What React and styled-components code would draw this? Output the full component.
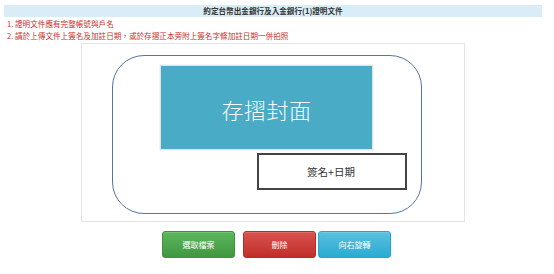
import React from "react";
import styled, { createGlobalStyle } from "styled-components";

const Global = createGlobalStyle`
  html, body { margin: 0; padding: 0; background: #fff; }
  body { font-family: "Noto Sans CJK TC", "Liberation Sans", sans-serif; }
`;

const Page = styled.div`
  width: 554px;
  height: 274px;
  padding: 5px 12px 0 4px;
  box-sizing: border-box;
`;

const TitleBar = styled.div`
  height: 12px;
  background: #d9edf7;
  color: #333;
  font-size: 7.6px;
  font-weight: bold;
  line-height: 12px;
  text-align: center;
`;

const Notes = styled.ol`
  list-style: none;
  margin: 1px 0 0;
  padding: 0 0 0 3px;
`;

const Note = styled.li`
  color: #c9302c;
  font-size: 7.6px;
  line-height: 11.5px;
  height: 11.5px;
  white-space: nowrap;
`;

const Frame = styled.div`
  width: 384px;
  height: 179px;
  margin: 2px auto 0;
  box-sizing: border-box;
  border: 1px solid #e4e4e4;
  padding: 11px 42px 0 30px;
`;

const Pocket = styled.div`
  height: 159px;
  box-sizing: border-box;
  border: 1.5px solid #5675a6;
  border-radius: 32px;
  display: flex;
  flex-direction: column;
  padding: 9px 14px 0 47px;
`;

const Cover = styled.div`
  width: 213px;
  height: 85px;
  box-sizing: border-box;
  background: #4aabc6;
  border: 1px solid #e2e2e2;
  box-shadow: 0 0 1px #bbb;
  color: #f4fafc;
  font-size: 22px;
  font-weight: 300;
  letter-spacing: 0.5px;
  display: flex;
  align-items: center;
  justify-content: center;
  padding-top: 3px;
`;

const SignBox = styled.div`
  align-self: flex-end;
  width: 150px;
  height: 37px;
  margin-top: 3px;
  box-sizing: border-box;
  border: 2px solid #444;
  color: #333;
  font-size: 10.5px;
  display: flex;
  align-items: center;
  justify-content: center;
  padding-right: 2px;
`;

const Actions = styled.div`
  display: flex;
  padding: 9px 0 0 158px;
`;

const tones = {
  green: ["#5cb85c", "#419641", "#3e8f3e"],
  red: ["#d9534f", "#c12e2a", "#b92c28"],
  blue: ["#5bc0de", "#2aabd2", "#28a4c9"],
};

const Button = styled.button`
  width: 73px;
  height: 27px;
  margin-right: ${(p) => p.$gap}px;
  border: 1px solid ${(p) => tones[p.$tone][2]};
  border-radius: 3px;
  background: linear-gradient(${(p) => tones[p.$tone][0]}, ${(p) => tones[p.$tone][1]});
  color: #fff;
  font-family: "Noto Sans CJK TC", "Liberation Sans", sans-serif;
  font-size: 8px;
  padding: 0;
  box-shadow: inset 0 1px 0 rgba(255, 255, 255, 0.15);
`;

export default function App() {
  return (
    <Page>
      <Global />
      <TitleBar>約定台幣出金銀行及入金銀行(1)證明文件</TitleBar>
      <Notes>
        <Note>1. 證明文件應有完整帳號與戶名</Note>
        <Note>2. 請於上傳文件上簽名及加註日期，或於存摺正本旁附上簽名字條加註日期一併拍照</Note>
      </Notes>
      <Frame>
        <Pocket>
          <Cover>存摺封面</Cover>
          <SignBox>簽名+日期</SignBox>
        </Pocket>
      </Frame>
      <Actions>
        <Button $tone="green" $gap={8}>選取檔案</Button>
        <Button $tone="red" $gap={2}>刪除</Button>
        <Button $tone="blue" $gap={0}>向右旋轉</Button>
      </Actions>
    </Page>
  );
}
